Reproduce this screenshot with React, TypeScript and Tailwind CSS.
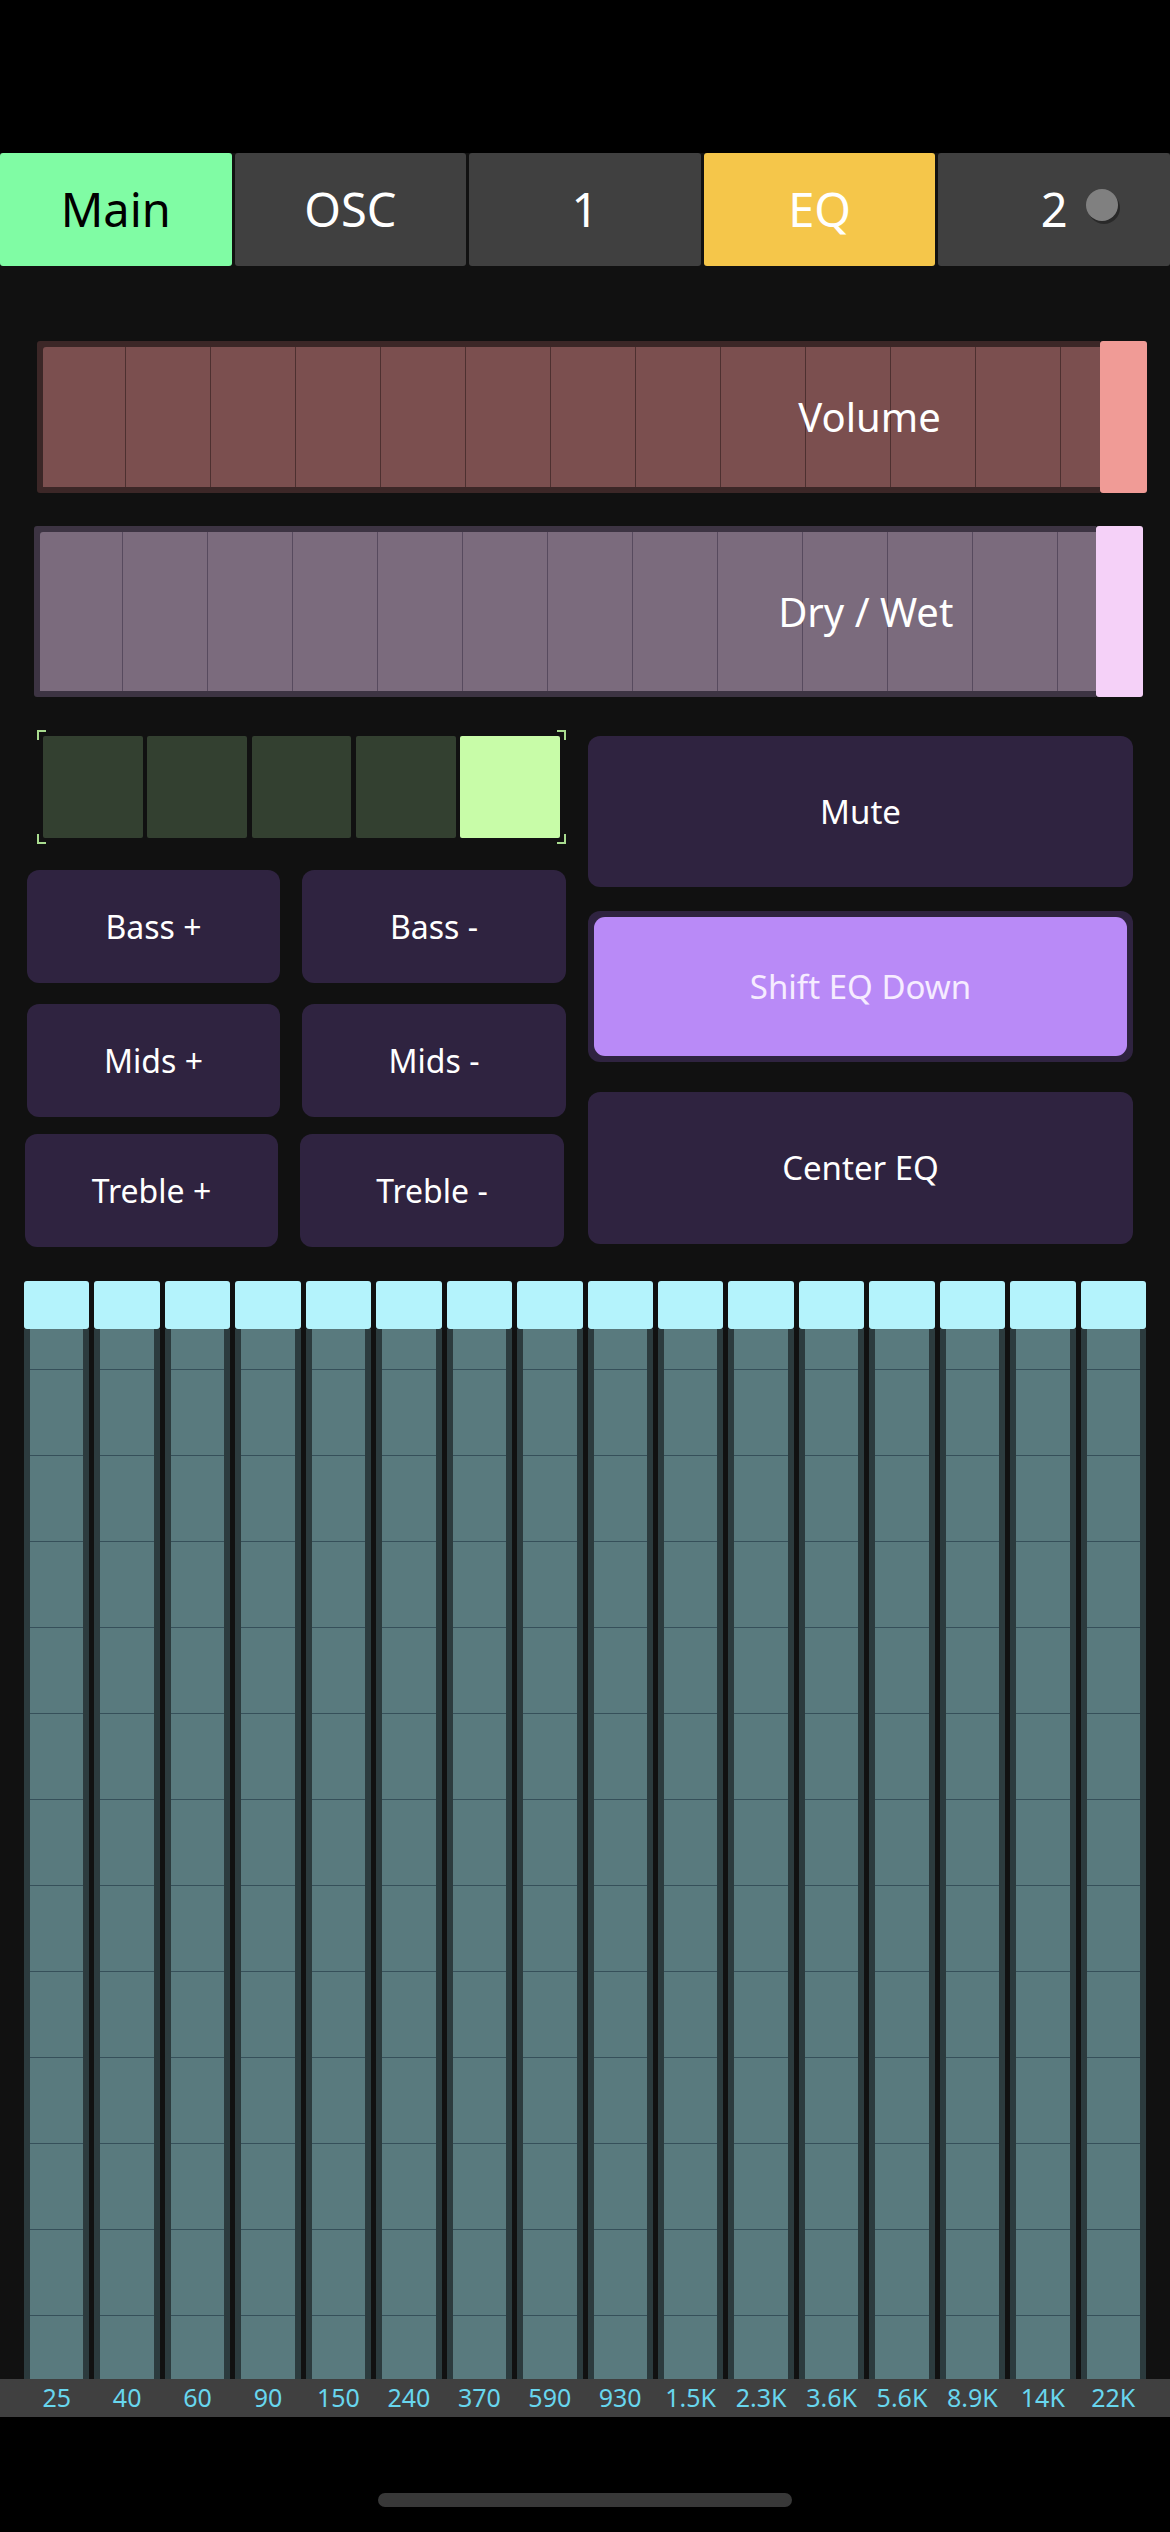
const tabs = [
  { label: 'Main', cls: 'bg-[#80fca4] text-black' },
  { label: 'OSC', cls: 'bg-[#404040] text-white' },
  { label: '1', cls: 'bg-[#404040] text-white' },
  { label: 'EQ', cls: 'bg-[#f5c64a] text-white' },
  { label: '2', cls: 'bg-[#404040] text-white', dot: true },
]

const bands = ['25', '40', '60', '90', '150', '240', '370', '590', '930', '1.5K', '2.3K', '3.6K', '5.6K', '8.9K', '14K', '22K']

type SliderProps = {
  label: string
  className: string
  border: string
  fill: string
  line: string
  handle: string
}

const Slider = ({ label, className, border, fill, line, handle }: SliderProps) => (
  <div className={`relative flex ${className}`}>
    <div className={`flex flex-1 rounded-l-[3px] py-[6px] pl-[6px] ${border}`}>
      <div className={`relative flex-1 overflow-hidden rounded-tl-[3px] ${fill}`}>
        <div className="absolute inset-0 flex gap-[84px] pl-[82px]">
          {Array.from({ length: 12 }).map((_, i) => (
            <div key={i} className={`w-px shrink-0 ${line}`} />
          ))}
        </div>
      </div>
    </div>
    <div className={`w-[47px] rounded-[3px] ${handle}`} />
    <div className="absolute inset-0 flex">
      <div className="flex-1" />
      <div className="flex flex-1 items-center justify-center text-[40px] text-white">{label}</div>
    </div>
  </div>
)

const PadButton = ({ label }: { label: string }) => (
  <button className="flex h-[113px] items-center justify-center rounded-xl bg-[#2f2340] text-[32px] text-white">
    {label}
  </button>
)

const Corner = ({ pos }: { pos: string }) => (
  <div className={`absolute h-[10px] w-[9px] border-[#a9dc8f] ${pos}`} />
)

export default function App() {
  return (
    <div className="flex min-h-screen w-[1170px] flex-col bg-black font-['Noto_Sans','Open_Sans',sans-serif]">
      <div className="h-[153px]" />

      {/* tab strip */}
      <div className="flex h-[113px] gap-[3px] bg-[#111111]">
        {tabs.map((t) => (
          <div
            key={t.label}
            className={`relative flex flex-1 items-center justify-center rounded-[3px] text-[47px] ${t.cls}`}
          >
            {t.label}
            {t.dot && (
              <div className="absolute left-[148px] top-[36px] h-[32px] w-[32px] rounded-full bg-[#808080] shadow-[2px_3px_0_rgba(0,0,0,0.35)]" />
            )}
          </div>
        ))}
      </div>

      <div className="flex flex-col bg-[#111111]">
        <Slider
          label="Volume"
          className="ml-[37px] mr-[23px] mt-[75px] h-[152px]"
          border="bg-[#3c2727]"
          fill="bg-[#7b4f4f]"
          line="bg-[#4d3030]"
          handle="bg-[#f09b96]"
        />
        <Slider
          label="Dry / Wet"
          className="ml-[34px] mr-[27px] mt-[33px] h-[171px]"
          border="bg-[#3d3443]"
          fill="bg-[#7b6b7d]"
          line="bg-[#574a5e]"
          handle="bg-[#f5d1f8]"
        />

        {/* controls */}
        <div className="mt-[33px] flex gap-[22px] pl-[27px] pr-[37px]">
          <div className="flex w-[539px] flex-col">
            <div className="relative ml-[10px] flex h-[114px] gap-[4.5px] p-[6px]">
              <Corner pos="left-0 top-0 border-l-2 border-t-2" />
              <Corner pos="left-0 bottom-0 border-l-2 border-b-2" />
              <Corner pos="right-0 top-0 border-r-2 border-t-2" />
              <Corner pos="right-0 bottom-0 border-r-2 border-b-2" />
              {[0, 1, 2, 3, 4].map((i) => (
                <div
                  key={i}
                  className={`flex-1 rounded-[2px] ${i === 4 ? 'bg-[#c8fca8]' : 'bg-[#334030]'}`}
                />
              ))}
            </div>
            <div className="mt-[26px] grid grid-cols-[253px_1fr] gap-x-[22px]">
              <PadButton label="Bass +" />
              <PadButton label="Bass -" />
            </div>
            <div className="mt-[21px] grid grid-cols-[253px_1fr] gap-x-[22px]">
              <PadButton label="Mids +" />
              <PadButton label="Mids -" />
            </div>
            <div className="-ml-[2px] mt-[17px] grid grid-cols-[253px_1fr] gap-x-[22px] pr-[2px]">
              <PadButton label="Treble +" />
              <PadButton label="Treble -" />
            </div>
          </div>

          <div className="mt-[6px] flex flex-1 flex-col">
            <button className="flex h-[151px] items-center justify-center rounded-xl bg-[#2f2340] text-[33px] text-white">
              Mute
            </button>
            <div className="mt-[24px] flex h-[151px] rounded-xl bg-[#2f2340] p-[6px]">
              <button className="flex flex-1 items-center justify-center rounded-[11px] bg-[#b98af7] text-[33px] text-[#f6ecff]">
                Shift EQ Down
              </button>
            </div>
            <button className="mt-[30px] flex h-[152px] items-center justify-center rounded-xl bg-[#2f2340] text-[33px] text-white">
              Center EQ
            </button>
          </div>
        </div>

        {/* eq faders */}
        <div className="mt-[34px] flex gap-[5px] px-[24px]">
          {bands.map((b) => (
            <div key={b} className="flex flex-1 flex-col">
              <div className="h-[48px] rounded-[3px] bg-[#b4f3fc]" />
              <div className="flex h-[1050px] bg-[#2c3b3e] px-[6px]">
                <div className="flex flex-1 flex-col gap-[85px] overflow-hidden bg-[#597a7e] pt-[40px]">
                  {Array.from({ length: 12 }).map((_, i) => (
                    <div key={i} className="h-px shrink-0 bg-[#36505a]" />
                  ))}
                </div>
              </div>
            </div>
          ))}
        </div>
      </div>

      <div className="flex h-[38px] gap-[5px] bg-[#404040] px-[24px]">
        {bands.map((b) => (
          <div key={b} className="flex flex-1 items-center justify-center text-[25px] text-[#68d6ee]">
            {b}
          </div>
        ))}
      </div>

      <div className="mx-auto mt-[76px] h-[14px] w-[414px] rounded-full bg-[#383838]" />
    </div>
  )
}
